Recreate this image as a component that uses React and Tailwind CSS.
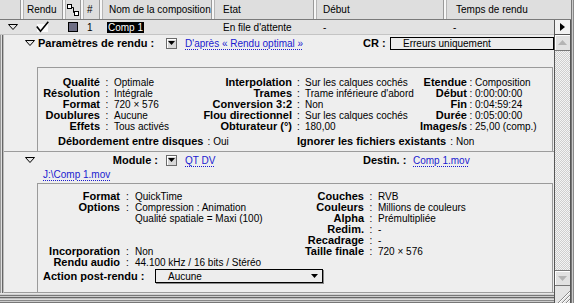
import React from 'react';

// Render queue panel (Mac OS 9 platinum look)

const Sep = () => (
  <div className="flex h-full w-[4px] shrink-0">
    <div className="w-px bg-[#9a9a9a]" />
    <div className="w-[2px] bg-[#f7f7f7]" />
    <div className="w-px bg-[#b5b5b5]" />
  </div>
);

const Disclosure = () => (
  <svg width="10" height="6" viewBox="0 0 10 6">
    <path d="M0.5 0.5 H9.5 L5 5.5 Z" fill="#e6e6e6" stroke="#000" strokeWidth="1" />
  </svg>
);

const PopBtn = () => (
  <div className="flex h-[11px] w-[11px] items-center justify-center border border-[#6a6a6a] bg-[#d8d8d8] shadow-[inset_1px_1px_0_#fff]">
    <svg width="7" height="4" viewBox="0 0 7 4">
      <path d="M0 0H7L3.5 4Z" fill="#000" />
    </svg>
  </div>
);

const Link = ({ children }) => (
  <span className="whitespace-nowrap text-[#1a1ad0] underline decoration-dotted underline-offset-2">{children}</span>
);

const F = ({ l, v, lw, cw }) => (
  <div className="flex h-[11px] items-baseline whitespace-nowrap leading-[11px]">
    <span className={`${lw} shrink-0 text-right text-[11px] font-bold`}>{l}</span>
    <span className={`${cw} shrink-0 text-center`}>{l ? ':' : ''}</span>
    <span>{v}</span>
  </div>
);

const Header = () => (
  <div className="flex h-[20px] shrink-0 items-stretch border-b border-[#7a7a7a] bg-[#dedede]">
    <div className="w-[20px]" />
    <Sep />
    <div className="flex w-[38px] items-center pl-[3px]">Rendu</div>
    <Sep />
    <div className="flex w-[14px] items-center pl-[1px]">
      <svg width="12" height="12" viewBox="0 0 12 12">
        <rect x="0.5" y="0.5" width="4" height="4" fill="#fff" stroke="#000" />
        <rect x="7.5" y="7.5" width="4" height="4" fill="#fff" stroke="#000" />
        <path d="M4.5 3.5 H6.5 V8.5 H7.5" stroke="#000" fill="none" />
      </svg>
    </div>
    <Sep />
    <div className="flex w-[15px] items-center pl-[3px]">#</div>
    <Sep />
    <div className="flex w-[108px] items-center pl-[6px] whitespace-nowrap">Nom de la composition</div>
    <Sep />
    <div className="flex w-[98px] items-center pl-[8px]">Etat</div>
    <Sep />
    <div className="flex w-[126px] items-center pl-[6px]">Début</div>
    <Sep />
    <div className="flex flex-1 items-center pl-[9px] whitespace-nowrap">Temps de rendu</div>
  </div>
);

const CompRow = () => (
  <div className="flex h-[15px] shrink-0 items-center border-b border-[#c4c4c4] bg-[#e2e2e2] whitespace-nowrap">
    <div className="flex w-[24px] pl-[8px]">
      <Disclosure />
    </div>
    <div className="flex w-[42px] pl-[12px]">
      <svg width="13" height="12" viewBox="0 0 13 12">
        <rect x="1" y="3" width="11" height="8" fill="#fafafa" />
        <path d="M0.8 5.5 L4.5 10.2 L12.3 0.8" fill="none" stroke="#000" strokeWidth="1.6" />
      </svg>
    </div>
    <div className="flex w-[18px] pl-[2px]">
      <div className="h-[10px] w-[10px] border border-black bg-[#6e6e84]" />
    </div>
    <div className="w-[20px] pl-[3px]">1</div>
    <div className="w-[113px] pl-[3px]">
      <span className="inline-block h-[11px] bg-black px-[1px] leading-[11px] text-white">Comp 1</span>
    </div>
    <div className="w-[100px] pl-[6px]">En file d'attente</div>
    <div className="w-[130px] pl-[6px]">-</div>
    <div className="flex-1 pl-[6px]">-</div>
  </div>
);

const Box1 = () => (
  <div className="mr-[1px] ml-[33px] mt-[17px] flex flex-1 flex-col border-x border-t border-[#9a9a9a] pt-[9px]">
    <div className="flex">
      <div className="flex w-[146px] flex-col">
        <F l="Qualité" v="Optimale" lw="w-[62px]" cw="w-[14px]" />
        <F l="Résolution" v="Intégrale" lw="w-[62px]" cw="w-[14px]" />
        <F l="Format" v="720 × 576" lw="w-[62px]" cw="w-[14px]" />
        <F l="Doublures" v="Aucune" lw="w-[62px]" cw="w-[14px]" />
        <F l="Effets" v="Tous activés" lw="w-[62px]" cw="w-[14px]" />
      </div>
      <div className="flex w-[236px] flex-col">
        <F l="Interpolation" v="Sur les calques cochés" lw="w-[108px]" cw="w-[13px]" />
        <F l="Trames" v="Trame inférieure d'abord" lw="w-[108px]" cw="w-[13px]" />
        <F l="Conversion 3:2" v="Non" lw="w-[108px]" cw="w-[13px]" />
        <F l="Flou directionnel" v="Sur les calques cochés" lw="w-[108px]" cw="w-[13px]" />
        <F l="Obturateur (°)" v="180,00" lw="w-[108px]" cw="w-[13px]" />
      </div>
      <div className="flex flex-1 flex-col">
        <F l="Etendue" v="Composition" lw="w-[47px]" cw="w-[8px]" />
        <F l="Début" v="0:00:00:00" lw="w-[47px]" cw="w-[8px]" />
        <F l="Fin" v="0:04:59:24" lw="w-[47px]" cw="w-[8px]" />
        <F l="Durée" v="0:05:00:00" lw="w-[47px]" cw="w-[8px]" />
        <F l="Images/s" v="25,00 (comp.)" lw="w-[47px]" cw="w-[8px]" />
      </div>
    </div>
    <div className="mt-[3px] flex h-[12px] items-baseline whitespace-nowrap pl-[20px] leading-[12px]">
      <div className="flex w-[239px] items-baseline">
        <span className="text-[11px] font-bold">Débordement entre disques</span>
        <span className="ml-[4px]">:</span>
        <span className="ml-[3px]">Oui</span>
      </div>
      <span className="text-[11px] font-bold">Ignorer les fichiers existants</span>
      <span className="ml-[4px]">:</span>
      <span className="ml-[3px]">Non</span>
    </div>
  </div>
);

const Box2 = () => (
  <div className="mr-[1px] ml-[33px] mt-[2px] flex flex-1 flex-col border-x border-t border-[#9a9a9a] pt-[7px]">
    <div className="flex">
      <div className="flex w-[252px] flex-col">
        <F l="Format" v="QuickTime" lw="w-[82px]" cw="w-[15px]" />
        <F l="Options" v="Compression : Animation" lw="w-[82px]" cw="w-[15px]" />
        <F l="" v="Qualité spatiale = Maxi (100)" lw="w-[82px]" cw="w-[15px]" />
        <F l="" v="" lw="w-[82px]" cw="w-[15px]" />
        <F l="" v="" lw="w-[82px]" cw="w-[15px]" />
        <F l="Incorporation" v="Non" lw="w-[82px]" cw="w-[15px]" />
        <F l="Rendu audio" v="44.100 kHz / 16 bits / Stéréo" lw="w-[82px]" cw="w-[15px]" />
      </div>
      <div className="flex flex-1 flex-col">
        <F l="Couches" v="RVB" lw="w-[74px]" cw="w-[14px]" />
        <F l="Couleurs" v="Millions de couleurs" lw="w-[74px]" cw="w-[14px]" />
        <F l="Alpha" v="Prémultipliée" lw="w-[74px]" cw="w-[14px]" />
        <F l="Redim." v="-" lw="w-[74px]" cw="w-[14px]" />
        <F l="Recadrage" v="-" lw="w-[74px]" cw="w-[14px]" />
        <F l="Taille finale" v="720 × 576" lw="w-[74px]" cw="w-[14px]" />
      </div>
    </div>
    <div className="mt-[1px] flex h-[14px] items-center whitespace-nowrap pl-[5px]">
      <span className="w-[112px] text-[11px] font-bold">Action post-rendu :</span>
      <div className="flex h-[14px] w-[168px] items-center justify-between border border-black bg-[#ededed] pr-[4px] pl-[12px] shadow-[1px_1px_0_#8a8a8a]">
        <span>Aucune</span>
        <svg width="7" height="4" viewBox="0 0 7 4">
          <path d="M0 0H7L3.5 4Z" fill="#000" />
        </svg>
      </div>
    </div>
  </div>
);

const Section1 = () => (
  <div className="flex h-[117px] flex-col border-b border-[#9c9c9c]">
    <div className="mt-[1px] flex h-[14px] items-center whitespace-nowrap">
      <div className="ml-[21px] flex w-[10px]">
        <Disclosure />
      </div>
      <div className="w-[124px] pl-[3px] text-[11px] font-bold">Paramètres de rendu :</div>
      <div className="ml-[7px]">
        <PopBtn />
      </div>
      <div className="ml-[8px] w-[178px]">
        <Link>D'après « Rendu optimal »</Link>
      </div>
      <div className="w-[27px] text-[11px] font-bold">CR :</div>
      <div className="flex h-[13px] flex-1 items-center border border-black bg-[#ececec] pl-[12px]">Erreurs uniquement</div>
    </div>
    <Box1 />
  </div>
);

const Section2 = () => (
  <div className="flex h-[141px] flex-col border-b border-[#9c9c9c]">
    <div className="mt-[1px] flex h-[14px] items-center whitespace-nowrap">
      <div className="ml-[21px] flex w-[10px]">
        <Disclosure />
      </div>
      <div className="w-[124px] pr-[1px] text-right text-[11px] font-bold">Module :</div>
      <div className="ml-[7px]">
        <PopBtn />
      </div>
      <div className="ml-[8px] w-[178px]">
        <Link>QT DV</Link>
      </div>
      <div className="w-[50px] text-[11px] font-bold">Destin. :</div>
      <Link>Comp 1.mov</Link>
    </div>
    <div className="ml-[39px] flex h-[14px] items-center">
      <Link>J:\Comp 1.mov</Link>
    </div>
    <Box2 />
  </div>
);

const Scrollbar = () => (
  <div className="flex w-[17px] shrink-0 flex-col border-x border-[#555]">
    <div className="flex h-[15px] items-center justify-center border-b border-[#555] bg-[#f2f2f2]">
      <svg width="5" height="8" viewBox="0 0 5 8">
        <path d="M0 0L5 4L0 8Z" fill="#000" />
      </svg>
    </div>
    <div className="flex h-[16px] items-center justify-center border-b border-[#777] bg-[#e2e2e2] shadow-[inset_1px_1px_0_#fff]">
      <svg width="9" height="5" viewBox="0 0 9 5">
        <path d="M0 5L4.5 0L9 5Z" fill="#b4b4b4" />
      </svg>
    </div>
    <div className="flex-1 bg-[repeating-conic-gradient(#cfcfcf_0%_25%,#f4f4f4_0%_50%)] bg-[length:2px_2px]" />
    <div className="flex h-[15px] items-center justify-center border-t border-[#777] bg-[#e2e2e2] shadow-[inset_1px_1px_0_#fff]">
      <svg width="9" height="5" viewBox="0 0 9 5">
        <path d="M0 0L4.5 5L9 0Z" fill="#b4b4b4" />
      </svg>
    </div>
    <div className="flex h-[18px] items-end justify-end border-t border-[#777] bg-[#e4e4e4]">
      <svg width="14" height="14" viewBox="0 0 14 14">
        <path d="M2 14L14 2M6 14L14 6M10 14L14 10" stroke="#8a8a8a" strokeWidth="1" />
        <path d="M3 14L14 3M7 14L14 7M11 14L14 11" stroke="#ffffff" strokeWidth="1" />
      </svg>
    </div>
  </div>
);

const LeftFrame = () => (
  <div className="flex w-[4px] shrink-0">
    <div className="w-px bg-[#999]" />
    <div className="w-px bg-[#e0e0e0]" />
    <div className="w-px bg-[#666]" />
    <div className="w-px bg-[#bbb]" />
  </div>
);

const BottomFrame = () => (
  <div className="flex h-[10px] shrink-0 flex-col">
    <div className="h-px bg-[#e6e6e6]" />
    <div className="h-px bg-[#d0d0d0]" />
    <div className="h-px bg-[#777]" />
    <div className="h-px bg-[#ccc]" />
    <div className="h-px bg-[#666]" />
    <div className="h-px bg-[#bbb]" />
    <div className="h-px bg-[#ddd]" />
    <div className="h-px bg-[#888]" />
    <div className="h-px bg-[#ccc]" />
    <div className="h-px bg-[#777]" />
  </div>
);

export default function App() {
  return (
    <div className="flex h-[303px] w-[574px] overflow-hidden bg-[#eeeeee] font-['Liberation_Sans',Arial,sans-serif] text-[10px] text-black">
      <div className="flex w-[571px] flex-col">
        <Header />
        <div className="flex flex-1">
          <div className="flex w-[554px] flex-col">
            <CompRow />
            <div className="flex flex-1">
              <LeftFrame />
              <div className="flex w-[550px] flex-col">
                <Section1 />
                <Section2 />
              </div>
            </div>
            <BottomFrame />
          </div>
          <Scrollbar />
        </div>
      </div>
      <div className="flex w-[3px]">
        <div className="w-px bg-[#777]" />
        <div className="w-px bg-[#ccc]" />
        <div className="w-px bg-[#888]" />
      </div>
    </div>
  );
}
